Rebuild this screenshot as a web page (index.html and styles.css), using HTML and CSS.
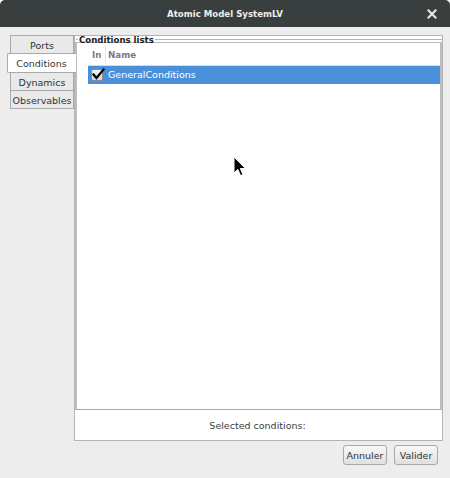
FILE: index.html
```html
<!DOCTYPE html>
<html>
<head>
<meta charset="utf-8">
<link rel="stylesheet" href="styles.css">
</head>
<body>
<div class="window">
  <div class="titlebar">
    <span class="title">Atomic Model SystemLV</span>
    <svg class="close" width="10" height="10" viewBox="0 0 10 10"><path d="M1.5 1.5 L8.5 8.5 M8.5 1.5 L1.5 8.5" stroke="#e4e4e2" stroke-width="2.2" stroke-linecap="square"/></svg>
  </div>
  <div class="body">
    <div class="main">
      <div class="tabs">
        <div class="tab">Ports</div>
        <div class="tab selected">Conditions</div>
        <div class="tab">Dynamics</div>
        <div class="tab">Observables</div>
      </div>
      <div class="panel">
        <div class="legend"><span class="legend-text">Conditions lists</span></div>
        <div class="pane">
          <div class="table">
            <div class="thead">
              <div class="th th-in">In</div>
              <div class="th th-name">Name</div>
            </div>
            <div class="row selected-row">
              <div class="cell-in">
                <span class="check">
                  <svg width="15" height="15" viewBox="0 0 15 15"><path d="M2.5 7.5 L5.5 11 L12.5 2.5" fill="none" stroke="#000" stroke-width="2.2" stroke-linecap="square"/></svg>
                </span>
              </div>
              <div class="cell-name">GeneralConditions</div>
            </div>
          </div>
        </div>
        <div class="footer">Selected conditions:</div>
      </div>
    </div>
    <div class="buttons">
      <button class="btn btn-cancel">Annuler</button>
      <button class="btn btn-ok">Valider</button>
    </div>
  </div>
  <svg class="cursor" width="14" height="21" viewBox="0 0 14 21"><path d="M1 1 L1 17 L4.8 13.4 L7.6 19.6 L10 18.6 L7.3 12.5 L12.4 12.5 Z" fill="#000" stroke="#fff" stroke-width="1" stroke-linejoin="round"/></svg>
</div>
</body>
</html>
```

FILE: styles.css
```css
html, body {
  margin: 0;
  padding: 0;
  background: #ffffff;
}
body {
  width: 450px;
  height: 478px;
  overflow: hidden;
  font-family: "DejaVu Sans", sans-serif;
}
.window {
  position: relative;
  width: 450px;
  height: 478px;
  display: flex;
  flex-direction: column;
}
.titlebar {
  height: 27px;
  flex: none;
  background: #393f3f;
  border-radius: 5px 5px 0 0;
  display: flex;
  align-items: center;
  justify-content: center;
  position: relative;
}
.title {
  color: #eeeeec;
  font-weight: bold;
  font-size: 8.6px;
  line-height: 12px;
}
.close {
  position: absolute;
  right: 13px;
  top: 9px;
}
.body {
  flex: 1;
  background: #ededed;
  display: flex;
  flex-direction: column;
}
.main {
  display: flex;
  padding: 8px 0 0 10px;
}
.tabs {
  width: 64px;
  display: flex;
  flex-direction: column;
  position: relative;
  z-index: 1;
}
.tab {
  box-sizing: border-box;
  height: 19px;
  border: 1px solid #a9a9a9;
  margin-top: -1px;
  padding-top: 1px;
  background: #e9e9e9;
  color: #2e3436;
  font-size: 9.5px;
  display: flex;
  align-items: center;
  justify-content: center;
}
.tab:first-child {
  margin-top: 0;
}
.tab.selected {
  height: 20px;
  margin-left: -3px;
  margin-right: -2px;
  background: #ffffff;
  border-right: none;
  border-radius: 2px 0 0 2px;
  padding-right: 1px;
}
.panel {
  box-sizing: border-box;
  width: 369px;
  height: 406px;
  border: 1px solid #b4b4b4;
  background: #ffffff;
  display: flex;
  flex-direction: column;
}
.legend {
  height: 6px;
  display: flex;
  align-items: center;
  padding-left: 1px;
}
.legend::before {
  content: "";
  width: 2px;
  height: 1px;
  background: #b4b4b4;
  margin-right: 1px;
}
.legend::after {
  content: "";
  flex: 1;
  height: 1px;
  background: #b4b4b4;
  margin-left: 1px;
}
.legend-text {
  font-size: 8.6px;
  font-weight: bold;
  color: #1a1a1a;
  line-height: 6px;
  position: relative;
  top: 1px;
}
.pane {
  box-sizing: border-box;
  height: 368px;
  border-top: 1px solid #b9b9b9;
  border-bottom: 1px solid #a9a9a9;
  border-left: 2px solid #bdbdbd;
  border-right: 2px solid #bdbdbd;
  padding-left: 11px;
}
.table {
  display: flex;
  flex-direction: column;
}
.thead {
  display: flex;
  height: 23px;
  box-sizing: border-box;
  border-bottom: 1px solid #dadada;
}
.th {
  box-sizing: border-box;
  font-size: 8.7px;
  font-weight: bold;
  color: #7a7a7a;
  padding-top: 6px;
  line-height: 12px;
}
.th-in {
  width: 18px;
  padding-left: 4px;
  border-right: 1px solid #e2e2e2;
  margin: 2px 0 2px 0;
  padding-top: 4px;
}
.th-name {
  flex: 1;
  padding-left: 2px;
}
.row {
  display: flex;
  height: 18px;
  align-items: center;
}
.selected-row {
  background: #4a90d9;
  color: #ffffff;
}
.cell-in {
  width: 18px;
  height: 18px;
  display: flex;
  align-items: center;
  padding-left: 3px;
  box-sizing: border-box;
}
.check {
  position: relative;
  box-sizing: border-box;
  width: 12px;
  height: 12px;
  border: 1px solid #8c8c8c;
  border-radius: 2px;
  background: linear-gradient(#f4f4f4, #d6d6d6);
}
.check svg {
  position: absolute;
  left: -1px;
  top: -3px;
}
.cell-name {
  padding-left: 2px;
  font-size: 9.5px;
  line-height: 12px;
}
.footer {
  flex: 1;
  display: flex;
  align-items: center;
  justify-content: center;
  font-size: 9.5px;
  color: #3c3c3c;
  padding-right: 2px;
}
.buttons {
  display: flex;
  justify-content: flex-end;
  gap: 7px;
  padding: 4px 12px 0 0;
}
.btn {
  box-sizing: border-box;
  height: 20px;
  padding: 0;
  border: 1px solid #a8a8a8;
  border-radius: 3px;
  background: linear-gradient(#f8f8f8, #e0e0e0);
  color: #2e3436;
  font-family: "DejaVu Sans", sans-serif;
  font-size: 9.5px;
  display: flex;
  align-items: center;
  justify-content: center;
}
.btn-cancel {
  width: 44px;
}
.btn-ok {
  width: 44px;
}
.cursor {
  position: absolute;
  left: 233px;
  top: 156px;
}
```
